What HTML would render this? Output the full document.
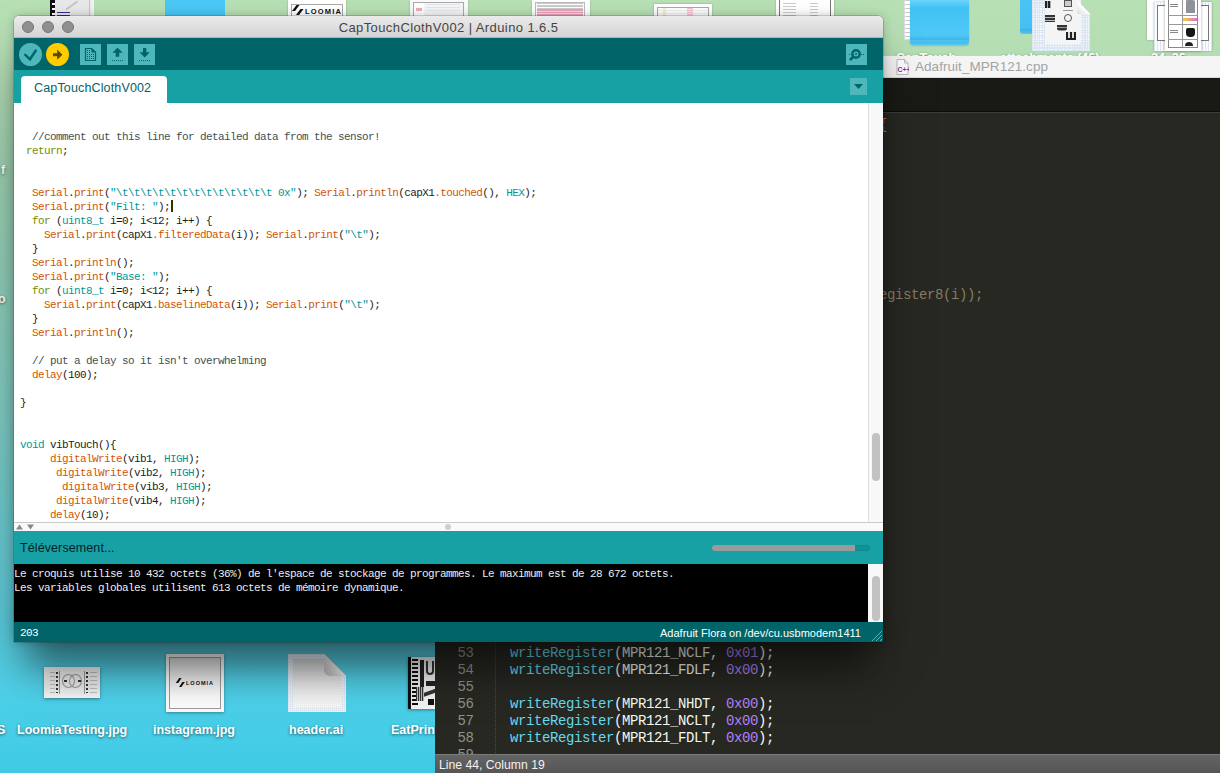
<!DOCTYPE html>
<html><head><meta charset="utf-8">
<style>
*{margin:0;padding:0;box-sizing:border-box}
html,body{width:1220px;height:773px;overflow:hidden}
body{position:relative;font-family:"Liberation Sans",sans-serif;
background:linear-gradient(180deg,#b8e0b5 0px,#b5ddb3 60px,#9ccfb0 170px,#80cbc2 410px,#60c9d6 590px,#4ccfe8 700px,#40cae6 773px);}
.a{position:absolute}
b{font-weight:normal}
.o{color:#d35400}.t{color:#00979c}.g{color:#728e00}.c{color:#434f54}
.mono{font-family:"Liberation Mono",monospace}
.lbl{font-size:12.5px;font-weight:bold;color:#fff;white-space:nowrap;text-shadow:0 1px 3px rgba(0,0,0,.55)}
/* arduino window */
#aw{left:14px;top:16px;width:869px;height:626px;background:#fff;border-radius:5px 5px 0 0;overflow:hidden;
box-shadow:0 26px 44px -10px rgba(0,0,0,.5),0 0 10px rgba(0,0,0,.2),0 0 0 0.5px rgba(0,0,0,.3)}
#title{left:0;top:0;width:869px;height:22px;background:linear-gradient(#ebebeb,#d4d4d4);border-bottom:1px solid #b4b4b4}
#title .t1{left:0;width:869px;top:4px;text-align:center;font-size:13px;letter-spacing:0.4px;color:#444;}
.tl{width:12px;height:12px;border-radius:50%;background:#8f8f93;border:0.5px solid #767676;top:5px}
#tb{left:0;top:22px;width:869px;height:32px;background:#006468}
.rb{width:23px;height:23px;border-radius:50%;top:5px}
.sq{width:21px;height:21px;background:#4db7bb;top:6px}
#tabs{left:0;top:54px;width:869px;height:33px;background:#17a1a5}
#tab{left:7px;top:6px;width:146px;height:28px;background:#fff;border-radius:4px 4px 0 0}
#tab span{position:absolute;left:13px;top:5px;font-size:12.5px;letter-spacing:0.15px;color:#006468}
#dd{left:836px;top:8px;width:17px;height:17px;background:#4db7bb}
#ed{left:0;top:87px;width:854px;height:419px;background:#fff;overflow:hidden}
#code{left:6px;top:27px;font-family:"Liberation Mono",monospace;font-size:11px;letter-spacing:-0.6px;line-height:14px;white-space:pre;color:#1c1c1c}
.caret{display:inline-block;width:2px;height:12px;background:#333300;vertical-align:-2px;margin-left:1px}
#vsb{left:854px;top:87px;width:15px;height:419px;background:#f8f8f8;border-left:1px solid #dedede}
#thumb{left:858px;top:417px;width:8px;height:48px;border-radius:4px;background:#c2c2c2}
#hint{left:0;top:506px;width:869px;height:9px;background:#fafafa;border-top:1px solid #c9c9c9}
#stat{left:0;top:515px;width:869px;height:33px;background:#17a1a5}
#stat span{position:absolute;left:6px;top:10px;font-size:12.5px;letter-spacing:0.1px;color:#002325}
#con{left:0;top:548px;width:854px;height:58px;background:#000}
#con pre{position:absolute;left:0;top:3px;font-family:"Liberation Mono",monospace;font-size:11px;letter-spacing:-0.6px;line-height:14px;color:#eee}
#csb{left:854px;top:548px;width:15px;height:58px;background:#f8f8f8}
#foot{left:0;top:606px;width:869px;height:20px;background:#006468}
</style></head><body>

<!-- desktop -->
<div id="desk">
  <!-- top row -->
  <div class="a" style="left:50px;top:0;width:44px;height:17px;background:#e9e9ea;border-right:2px solid #f4f4f6;box-shadow:inset -2px 0 0 #ececf2,inset -3px 0 0 #c4c0e0"></div>
  <div class="a" style="left:50px;top:0;width:5px;height:17px;background:#111"></div>
  <div class="a" style="left:52px;top:0;width:3px;height:17px;background:repeating-linear-gradient(180deg,transparent 0 3px,#fff 3px 5px);border-radius:1px"></div>
  <div class="a" style="left:57px;top:12px;width:13px;height:1px;background:#3a2aa0"></div>
  <div class="a" style="left:57px;top:15px;width:13px;height:1px;background:#3a2aa0"></div>
  <div class="a" style="left:66px;top:4px;width:14px;height:6px;border-top:2px solid #c8c8c8;transform:rotate(-35deg)"></div>
  <div class="a" style="left:165px;top:0;width:60px;height:17px;background:#4ac8f6"></div>
  <div class="a" style="left:288px;top:0;width:58px;height:17px;background:#fff;box-shadow:0 1px 2px rgba(0,0,0,.25)"></div>
  <div class="a" style="left:291px;top:4px;width:52px;height:13px;border:1px solid #aaa;border-bottom:0"></div>
  <svg class="a" width="12" height="11" style="left:292px;top:5px"><path d="M4.5 0h3l-4.5 6h-3z" fill="#111"/><path d="M8.5 4h3l-4.5 6h-3z" fill="#111"/></svg>
  <span class="a" style="left:305px;top:7px;font-size:7.5px;font-weight:bold;letter-spacing:1.2px;color:#111">LOOMIA</span>
  <div class="a" style="left:410px;top:0;width:58px;height:17px;background:#fafafa;box-shadow:0 1px 2px rgba(0,0,0,.2)"></div>
  <div class="a" style="left:413px;top:2px;width:51px;height:15px;border:1px solid #aaa;border-bottom:0;background:linear-gradient(90deg,#fff 0 20%,#f6f6f6 20%)"></div>
  <div class="a" style="left:416px;top:8px;width:6px;height:3px;background:#eab0b0"></div>
  <div class="a" style="left:426px;top:4px;width:34px;height:8px;background:repeating-linear-gradient(180deg,#dde3ec 0 1px,transparent 1px 3px);opacity:.8"></div>
  <div class="a" style="left:532px;top:0;width:58px;height:17px;background:#fff;box-shadow:0 1px 2px rgba(0,0,0,.2)"></div>
  <div class="a" style="left:535px;top:2px;width:50px;height:15px;border:1px solid #bbb;border-bottom:0"></div>
  <div class="a" style="left:537px;top:3px;width:46px;height:6px;background:repeating-linear-gradient(180deg,#aaa 0 1px,#fff 1px 2.5px);opacity:.6"></div>
  <div class="a" style="left:537px;top:9px;width:46px;height:8px;background:repeating-linear-gradient(180deg,#eba2ba 0 1.5px,#f8dae4 1.5px 2.5px)"></div>
  <div class="a" style="left:654px;top:4px;width:58px;height:13px;background:#fff;box-shadow:0 0 2px rgba(0,0,0,.25)"></div>
  <div class="a" style="left:657px;top:7px;width:52px;height:10px;border:1px solid #a8a8a8;border-bottom:0;background:repeating-linear-gradient(180deg,#fff 0 2px,#f0f0f0 2px 3px)"></div>
  <div class="a" style="left:687px;top:8px;width:6px;height:9px;background:repeating-linear-gradient(180deg,#f4c4d4 0 1px,#fbe4ec 1px 2px)"></div>
  <div class="a" style="left:663px;top:8px;width:3px;height:9px;background:#f8eec8"></div>
  <div class="a" style="left:776px;top:0;width:58px;height:17px;background:#fff;box-shadow:0 0 2px rgba(0,0,0,.25)"></div>
  <div class="a" style="left:779px;top:0;width:52px;height:17px;border-left:1px solid #777;border-right:1px solid #777"></div>
  <div class="a" style="left:783px;top:3px;width:13px;height:14px;background:repeating-linear-gradient(180deg,#555 0 1px,transparent 1px 3px);opacity:.3"></div>
  <div class="a" style="left:810px;top:3px;width:8px;height:14px;background:repeating-linear-gradient(180deg,#555 0 1px,transparent 1px 3px);opacity:.3"></div>
  <!-- top right -->
  <div class="a" style="left:904px;top:0;width:20px;height:40px;background:#fff;border:1px solid #ddd;border-top:0;background-image:repeating-linear-gradient(180deg,#ccc 0 1px,transparent 1px 4px)"></div>
  <div class="a" style="left:930px;top:0;width:38px;height:4px;background:#e8e8e8;border-radius:0 0 3px 3px"></div>
  <div class="a" style="left:910px;top:0;width:59px;height:45px;border-radius:0 0 3px 3px;background:linear-gradient(#6fd4fa 0,#56cbf7 4px,#40c2f3 8px,#50c8f6 35px,#3bb6e8 40px,#5fcaf5 41px,#3fb8ea 42px,#56c4f2 44px);box-shadow:0 1px 2px rgba(0,0,0,.15)"></div>
  <div class="a" style="left:1020px;top:0;width:14px;height:34px;border-radius:0 0 0 3px;background:linear-gradient(#4ac4f4,#44bff1 28px,#3bb3e6 30px,#57c6f4 34px)"></div>
  <div class="a" style="left:1032px;top:0;width:58px;height:51px;clip-path:polygon(0 0,45px 0,58px 14px,58px 51px,0 51px);background-color:#f7f9fc;background-image:repeating-linear-gradient(90deg,#dbe6f3 0 1px,transparent 1px 2.5px),repeating-linear-gradient(180deg,#dbe6f3 0 1px,transparent 1px 2.5px)"></div>
  <div class="a" style="left:1045px;top:0;width:36px;height:44px;background:#f4f4f4"></div>
  <div class="a" style="left:1077px;top:0;width:13px;height:14px;background:linear-gradient(225deg,transparent 50%,#fff 50%,#e4e4e4 90%)"></div>
  <div class="a" style="left:1045px;top:1px;width:6px;height:7px;background:repeating-linear-gradient(90deg,#222 0 2px,#aaa 2px 3px)"></div>
  <div class="a" style="left:1064px;top:0;width:8px;height:7px;border:1px solid #555;background:#ccc"></div>
  <div class="a" style="left:1063px;top:10px;width:10px;height:1px;background:#999"></div>
  <div class="a" style="left:1045px;top:15px;width:10px;height:7px;background:repeating-linear-gradient(180deg,#333 0 2px,#bbb 2px 3px)"></div>
  <div class="a" style="left:1064px;top:14px;width:8px;height:8px;border:1px solid #555;border-radius:50%"></div>
  <div class="a" style="left:1057px;top:25px;width:10px;height:6px;background:repeating-linear-gradient(180deg,#333 0 2px,#999 2px 3px);border-radius:0 0 3px 3px"></div>
  <div class="a" style="left:1066px;top:32px;width:10px;height:8px;background:repeating-linear-gradient(90deg,#222 0 2px,#ddd 2px 4px);border-bottom:2px solid #222"></div>
  <div class="a" style="left:1147px;top:0;width:40px;height:40px;background:#fff;box-shadow:0 0 2px rgba(0,0,0,.3)"></div>
  <div class="a" style="left:1154px;top:2px;width:58px;height:49px;background:#fbfbfb;box-shadow:0 0 2px rgba(0,0,0,.3);background-image:repeating-linear-gradient(90deg,#dde6f0 0 1px,transparent 1px 3px);"></div>
  <div class="a" style="left:1157px;top:5px;width:52px;height:36px;background:#fff;border:1px solid #777"></div>
  <div class="a" style="left:1165px;top:0;width:36px;height:51px;background:#fff;box-shadow:0 0 3px rgba(0,0,0,.3)"></div>
  <div class="a" style="left:1168px;top:0;width:30px;height:48px;border:1px solid #888;border-top:0;background:linear-gradient(90deg,transparent 13px,#999 13px 14px,transparent 14px)"></div>
  <div class="a" style="left:1168px;top:15px;width:30px;height:1px;background:#999"></div><div class="a" style="left:1168px;top:24px;width:30px;height:1px;background:#999"></div><div class="a" style="left:1168px;top:39px;width:30px;height:1px;background:#999"></div><div class="a" style="left:1170px;top:4px;width:8px;height:4px;background:repeating-linear-gradient(180deg,#888 0 1px,transparent 1px 2px)"></div><div class="a" style="left:1170px;top:30px;width:8px;height:4px;background:repeating-linear-gradient(180deg,#888 0 1px,transparent 1px 2px)"></div>
  <div class="a" style="left:1184px;top:0;width:12px;height:13px;background:linear-gradient(90deg,#fff 0 2px,#8d9398 2px 11px,#fff 11px);border-radius:4px 4px 0 0"></div>
  <div class="a" style="left:1183px;top:18px;width:14px;height:3px;background:linear-gradient(90deg,#f0d040,#e070d0)"></div>
  <div class="a" style="left:1186px;top:28px;width:9px;height:9px;background:#151515;border-radius:2px 2px 4px 4px"></div>
  <div class="a" style="left:1185px;top:42px;width:8px;height:4px;background:#222;border-radius:4px 4px 0 0"></div>
  <!-- label tops peeking above sublime -->
  <span class="a lbl" style="left:896px;top:51px">CapTouch...</span>
  <span class="a lbl" style="left:1000px;top:51px">attachments (46)</span>
  <span class="a lbl" style="left:1151px;top:51px">24_26...</span>
  <!-- left strip labels -->
  <span class="a lbl" style="left:1px;top:163px">f</span>
  <span class="a lbl" style="left:-2px;top:292px">o</span>
  <!-- bottom row -->
  <span class="a lbl" style="left:-3px;top:723px">S</span>
  <div class="a" style="left:44px;top:667px;width:56px;height:31px;background:linear-gradient(#f2f2f2,#e8e8e8 60%,#f4f4f4);box-shadow:0 1px 3px rgba(0,0,0,.4)">
    <div class="a" style="left:18px;top:7px;width:13px;height:14px;border:1px solid #999;border-radius:50%"></div>
    <div class="a" style="left:25px;top:7px;width:13px;height:14px;border:1px solid #999;border-radius:50%"></div>
    <div class="a" style="left:15px;top:4px;width:1px;height:23px;background:#999"></div>
    <div class="a" style="left:40px;top:4px;width:1px;height:23px;background:#999"></div>
    <div class="a" style="left:6px;top:5px;width:5px;height:21px;background:repeating-linear-gradient(180deg,#bbb 0 1px,transparent 1px 4px)"></div>
    <div class="a" style="left:12px;top:5px;width:2px;height:21px;background:repeating-linear-gradient(180deg,#333 0 2px,transparent 2px 4px)"></div>
    <div class="a" style="left:42px;top:5px;width:2px;height:21px;background:repeating-linear-gradient(180deg,#333 0 2px,transparent 2px 4px)"></div>
    <div class="a" style="left:46px;top:5px;width:7px;height:21px;background:repeating-linear-gradient(180deg,#bbb 0 1px,transparent 1px 4px)"></div>
    <div class="a" style="left:20px;top:13px;width:3px;height:2px;background:#333"></div>
    <div class="a" style="left:34px;top:13px;width:3px;height:2px;background:#333"></div>
  </div>
  <span class="a lbl" style="left:17px;top:723px">LoomiaTesting.jpg</span>
  <div class="a" style="left:166px;top:654px;width:58px;height:58px;background:linear-gradient(#fff,#f8f8f8);box-shadow:0 1px 3px rgba(0,0,0,.35)">
    <div class="a" style="left:3px;top:3px;width:52px;height:52px;border:1px solid #9a9a9a;background:linear-gradient(#e2e2e2,#fafafa 80%)"></div>
    <svg class="a" width="9" height="10" style="left:10px;top:24px"><path d="M3.2 0h2.4l-3.4 5h-2.4z" fill="#111"/><path d="M6.4 4h2.4l-3.4 5h-2.4z" fill="#111"/></svg>
    <span class="a" style="left:20px;top:25.5px;font-size:5.5px;font-weight:bold;letter-spacing:1px;color:#111">LOOMIA</span>
  </div>
  <span class="a lbl" style="left:153px;top:723px">instagram.jpg</span>
  <div class="a" style="left:288px;top:654px;width:58px;height:58px;clip-path:polygon(0 0,36px 0,58px 22px,58px 58px,0 58px);background-color:#f6f8fb;background-image:repeating-linear-gradient(90deg,#dfe8f3 0 1px,transparent 1px 2px),repeating-linear-gradient(180deg,#dfe8f3 0 1px,transparent 1px 2px);box-shadow:0 1px 3px rgba(0,0,0,.3)">
    <div class="a" style="left:5px;top:5px;width:48px;height:48px;background:linear-gradient(#d8d8d8,#ececec 70%,#f4f4f4)"></div>
    <div class="a" style="left:36px;top:0;width:22px;height:22px;background:linear-gradient(225deg,transparent 50%,#f0f0f0 50%,#c0c0c0 85%);border-radius:0 0 0 6px"></div>
  </div>
  <span class="a lbl" style="left:289px;top:723px">header.ai</span>
  <div class="a" style="left:408px;top:657px;width:28px;height:52px;background:#f0f0f0;box-shadow:0 1px 3px rgba(0,0,0,.4)">
    <div class="a" style="left:0;top:0;width:3px;height:52px;background:#111"></div>
    <div class="a" style="left:4px;top:2px;width:6px;height:48px;background:repeating-linear-gradient(180deg,#111 0 2px,#eee 2px 4px)"></div>
    <div class="a" style="left:12px;top:3px;width:4px;height:38px;background:#222"></div>
    <div class="a" style="left:18px;top:4px;width:8px;height:14px;border:2px solid #333;border-top:0;border-radius:0 0 4px 4px"></div>
    <div class="a" style="left:18px;top:24px;width:10px;height:5px;background:#222"></div>
    <div class="a" style="left:14px;top:34px;width:14px;height:4px;background:#333;transform:skewY(-20deg)"></div>
    <div class="a" style="left:8px;top:30px;width:8px;height:14px;background:repeating-linear-gradient(90deg,#333 0 1px,#bbb 1px 2px)"></div>
    <div class="a" style="left:20px;top:42px;width:6px;height:6px;background:#111"></div>
  </div>
  <span class="a lbl" style="left:391px;top:723px">EatPrint</span>
</div>

<!-- sublime window -->
<div id="sw" class="a" style="left:435px;top:56px;width:785px;height:717px;background:#272822;overflow:hidden">
  <div class="a" style="left:0;top:0;width:785px;height:22px;background:#f5f5f5;border-bottom:1px solid #d8d8d8">
    <svg class="a" width="13" height="16" style="left:461px;top:3px"><path d="M1 .5h7.5l3.5 3.5v11.5h-11z" fill="#fff" stroke="#bbb"/><path d="M8.5 .5v3.5h3.5" fill="none" stroke="#bbb"/><text x="1.5" y="13" font-size="7" font-family="Liberation Sans" font-weight="bold" fill="#7b3fa0">C++</text></svg>
    <span class="a" style="left:480px;top:3px;font-size:13.5px;color:#a3a3a3;letter-spacing:0.05px">Adafruit_MPR121.cpp</span>
  </div>
  <div class="a" style="left:0;top:22px;width:785px;height:34px;background:#191a15;border-bottom:1px solid #0b0b09"></div><div class="a" style="left:0;top:56px;width:785px;height:1px;background:#3d3e38"></div>
  <div class="a" style="left:60px;top:56px;width:0;height:643px;border-left:1px dotted #4a4b45"></div>
  <div class="a mono" style="left:0;top:0;width:785px;height:699px;font-size:14px;letter-spacing:-0.4px;line-height:17px;white-space:pre;color:#f8f8f2">
    <div class="a" style="left:444px;top:61px;color:#d06a2a">{</div>
    <div class="a" style="left:436px;top:231px;color:#857b62">register8(i));</div>
    <div class="a" style="left:0;top:589px;width:38.5px;text-align:right;color:#8f908a">53
54
55
56
57
58
59</div>
    <div class="a" style="left:75px;top:589px"><b style="color:#66d9ef">writeRegister</b>(MPR121_NCLF, <b style="color:#ae81ff">0x01</b>);
<b style="color:#66d9ef">writeRegister</b>(MPR121_FDLF, <b style="color:#ae81ff">0x00</b>);

<b style="color:#66d9ef">writeRegister</b>(MPR121_NHDT, <b style="color:#ae81ff">0x00</b>);
<b style="color:#66d9ef">writeRegister</b>(MPR121_NCLT, <b style="color:#ae81ff">0x00</b>);
<b style="color:#66d9ef">writeRegister</b>(MPR121_FDLT, <b style="color:#ae81ff">0x00</b>);</div>
  </div>
  <div class="a" style="left:0;top:698px;width:785px;height:19px;background:linear-gradient(#646464,#555);border-top:1px solid #7a7a7a">
    <span class="a" style="left:4px;top:3px;font-size:12.2px;color:#f2f2f2">Line 44, Column 19</span>
  </div>
</div>

<div class="a" style="left:30px;top:628px;width:837px;height:44px;background:rgba(0,0,0,.22);filter:blur(16px)"></div>
<!-- arduino window -->
<div id="aw" class="a">
  <div id="title" class="a">
    <div class="a tl" style="left:8px"></div>
    <div class="a tl" style="left:28px"></div>
    <div class="a tl" style="left:48px"></div>
    <div class="a t1">CapTouchClothV002 | Arduino 1.6.5</div>
  </div>
  <div id="tb" class="a">
    <div class="a rb" style="left:5px;background:#4db7bb"><svg width="23" height="23" class="a" style="left:0;top:0"><path d="M6.3 11.8 L11 16.3 L16.7 7.6" fill="none" stroke="#006468" stroke-width="2.5" stroke-linecap="round"/></svg></div>
    <div class="a rb" style="left:32px;background:#ffcc00"><svg width="23" height="23" class="a" style="left:0;top:0"><path d="M7 10.2h4.2v-3.6l5.2 5.1-5.2 5v-3.4H7z" fill="#5c4a00"/></svg></div>
    <div class="a sq" style="left:66px"><svg width="21" height="21" class="a" style="left:0;top:0">
      <path d="M5.5 4.5h6.2l3.8 3.8v8.2h-10z" fill="none" stroke="#006468" stroke-width="1.2"/><path d="M11.5 4.5v4h4z" fill="#006468"/>
      <g fill="#006468"><rect x="7" y="6" width="1" height="1"/><rect x="9" y="6" width="1" height="1"/><rect x="7" y="8" width="1" height="1"/><rect x="9" y="8" width="1" height="1"/>
      <rect x="7" y="10" width="1" height="1"/><rect x="9" y="10" width="1" height="1"/><rect x="11" y="10" width="1" height="1"/><rect x="13" y="10" width="1" height="1"/>
      <rect x="7" y="12" width="1" height="1"/><rect x="9" y="12" width="1" height="1"/><rect x="11" y="12" width="1" height="1"/><rect x="13" y="12" width="1" height="1"/>
      <rect x="7" y="14" width="1" height="1"/><rect x="9" y="14" width="1" height="1"/><rect x="11" y="14" width="1" height="1"/><rect x="13" y="14" width="1" height="1"/></g></svg></div>
    <div class="a sq" style="left:93px"><svg width="21" height="21" class="a" style="left:0;top:0"><path d="M5.4 8.8L10.5 3.6l5.1 5.2h-3.4v4h-3.5v-4z" fill="#006468"/><path d="M5 16.6h11" stroke="#006468" stroke-width="1" stroke-dasharray="1 1"/></svg></div>
    <div class="a sq" style="left:120px"><svg width="21" height="21" class="a" style="left:0;top:0"><path d="M9 4h3.3v4.2h3.5l-5.1 5.2-5.1-5.2H9z" fill="#006468"/><path d="M5 16.6h11" stroke="#006468" stroke-width="1" stroke-dasharray="1 1"/></svg></div>
    <div class="a sq" style="left:832px"><svg width="21" height="21" class="a" style="left:0;top:0"><circle cx="10" cy="10" r="3.7" fill="none" stroke="#006468" stroke-width="2.4"/><circle cx="10" cy="10" r="1" fill="#006468"/><path d="M7.3 12.8l-2.6 2.6" stroke="#006468" stroke-width="2.7" stroke-linecap="round"/><g fill="#006468"><rect x="3" y="10" width="1" height="1"/><rect x="15" y="10" width="1" height="1"/><rect x="17" y="10" width="1" height="1"/></g></svg></div>
  </div>
  <div id="tabs" class="a">
    <div id="tab" class="a"><span>CapTouchClothV002</span></div>
    <div id="dd" class="a"><svg width="17" height="17" class="a" style="left:0;top:0"><path d="M4 6h9l-4.5 5z" fill="#006468"/></svg></div>
  </div>
  <div id="ed" class="a"><div id="code" class="a"><b class="c">  //comment out this line for detailed data from the sensor!</b>
 <b class="g">return</b>;


  <b class="o">Serial</b>.<b class="o">print</b>(<b class="t">"\t\t\t\t\t\t\t\t\t\t\t\t\t 0x"</b>); <b class="o">Serial</b>.<b class="o">println</b>(capX1<b class="o">.touched</b>(), <b class="t">HEX</b>);
  <b class="o">Serial</b>.<b class="o">print</b>(<b class="t">"Filt: "</b>);<i class="caret"></i>
  <b class="g">for</b> (<b class="t">uint8_t</b> i=0; i&lt;12; i++) {
    <b class="o">Serial</b>.<b class="o">print</b>(capX1<b class="o">.filteredData</b>(i)); <b class="o">Serial</b>.<b class="o">print</b>(<b class="t">"\t"</b>);
  }
  <b class="o">Serial</b>.<b class="o">println</b>();
  <b class="o">Serial</b>.<b class="o">print</b>(<b class="t">"Base: "</b>);
  <b class="g">for</b> (<b class="t">uint8_t</b> i=0; i&lt;12; i++) {
    <b class="o">Serial</b>.<b class="o">print</b>(capX1<b class="o">.baselineData</b>(i)); <b class="o">Serial</b>.<b class="o">print</b>(<b class="t">"\t"</b>);
  }
  <b class="o">Serial</b>.<b class="o">println</b>();

<b class="c">  // put a delay so it isn't overwhelming</b>
  <b class="o">delay</b>(100);

}


<b class="t">void</b> vibTouch(){
     <b class="o">digitalWrite</b>(vib1, <b class="t">HIGH</b>);
      <b class="o">digitalWrite</b>(vib2, <b class="t">HIGH</b>);
       <b class="o">digitalWrite</b>(vib3, <b class="t">HIGH</b>);
      <b class="o">digitalWrite</b>(vib4, <b class="t">HIGH</b>);
     <b class="o">delay</b>(10);</div></div>
  <div id="vsb" class="a"></div>
  <div id="thumb" class="a"></div>
  <div id="hint" class="a">
    <svg width="30" height="8" class="a" style="left:1px;top:0"><path d="M1 6.5L4.5 1.5 8 6.5z" fill="#888"/><path d="M12 1.5h7l-3.5 5z" fill="#888"/></svg>
    <div class="a" style="left:431px;top:1px;width:6px;height:6px;border-radius:50%;background:#cfcfcf"></div>
  </div>
  <div id="stat" class="a"><span>Téléversement...</span>
    <div class="a" style="left:698px;top:14px;width:158px;height:6px;border-radius:3px;background:#129295;border:1px solid #11888b"></div>
    <div class="a" style="left:698px;top:14px;width:143px;height:6px;border-radius:3px 0 0 3px;background:#9a9a9a;"></div>
  </div>
  <div id="con" class="a"><pre>Le croquis utilise 10 432 octets (36%) de l'espace de stockage de programmes. Le maximum est de 28 672 octets.
Les variables globales utilisent 613 octets de mémoire dynamique.</pre></div>
  <div id="csb" class="a"><div class="a" style="left:4px;top:12px;width:8px;height:45px;border-radius:4px;background:#c2c2c2"></div></div>
  <div id="foot" class="a">
    <span class="a mono" style="left:6px;top:5px;font-size:11px;letter-spacing:-0.6px;color:#fff">203</span>
    <span class="a" style="left:646px;top:5px;font-size:11px;color:#fff">Adafruit Flora on /dev/cu.usbmodem1411</span>
    <svg width="12" height="12" class="a" style="left:857px;top:8px"><path d="M11 1L1 11M11 5L5 11M11 9L9 11" stroke="#4db7bb" stroke-width="1"/></svg>
  </div>
</div>
</body></html>
